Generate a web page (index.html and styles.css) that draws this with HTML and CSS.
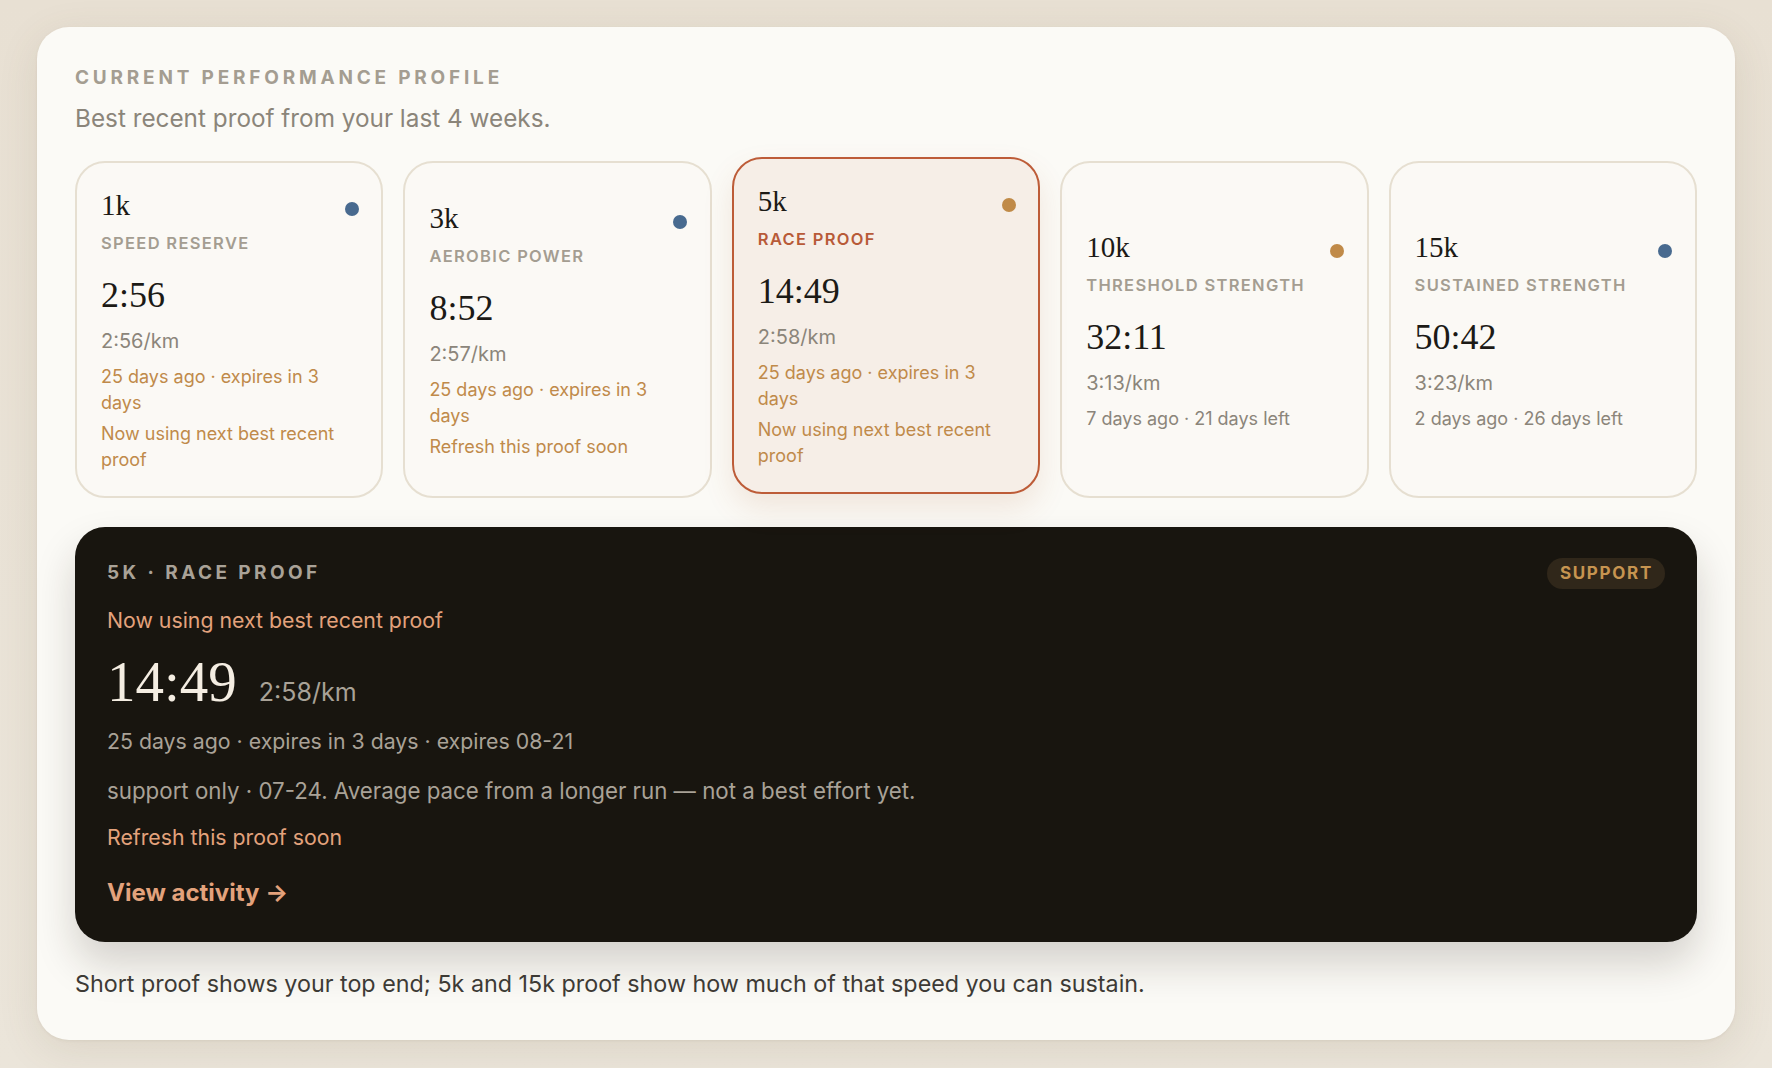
FILE: index.html
```html
<!DOCTYPE html>
<html lang="en">
<head>
<meta charset="utf-8">
<title>Current performance profile</title>
<link rel="stylesheet" href="styles.css">
</head>
<body>
<main class="profile">
  <h2 class="eyebrow">Current performance profile</h2>
  <p class="subtitle">Best recent proof from your last 4 weeks.</p>

  <div class="cards">
    <article class="card">
      <div class="card-head"><span class="dist">1k</span><span class="dot dot-blue"></span></div>
      <div class="label">Speed reserve</div>
      <div class="time">2:56</div>
      <div class="pace">2:56/km</div>
      <p class="meta warn">25 days ago · expires in 3 days</p>
      <p class="note warn">Now using next best recent proof</p>
    </article>
    <article class="card">
      <div class="card-head"><span class="dist">3k</span><span class="dot dot-blue"></span></div>
      <div class="label">Aerobic power</div>
      <div class="time">8:52</div>
      <div class="pace">2:57/km</div>
      <p class="meta warn">25 days ago · expires in 3 days</p>
      <p class="note warn">Refresh this proof soon</p>
    </article>
    <article class="card card-active">
      <div class="card-head"><span class="dist">5k</span><span class="dot dot-gold"></span></div>
      <div class="label label-active">Race proof</div>
      <div class="time">14:49</div>
      <div class="pace">2:58/km</div>
      <p class="meta warn">25 days ago · expires in 3 days</p>
      <p class="note warn">Now using next best recent proof</p>
    </article>
    <article class="card">
      <div class="card-head"><span class="dist">10k</span><span class="dot dot-gold"></span></div>
      <div class="label">Threshold strength</div>
      <div class="time">32:11</div>
      <div class="pace">3:13/km</div>
      <p class="meta">7 days ago · 21 days left</p>
    </article>
    <article class="card">
      <div class="card-head"><span class="dist">15k</span><span class="dot dot-blue"></span></div>
      <div class="label">Sustained strength</div>
      <div class="time">50:42</div>
      <div class="pace">3:23/km</div>
      <p class="meta">2 days ago · 26 days left</p>
    </article>
  </div>

  <section class="detail">
    <div class="detail-head">
      <span class="detail-label">5k · Race proof</span>
      <span class="badge">Support</span>
    </div>
    <p class="detail-alert">Now using next best recent proof</p>
    <div class="detail-time">
      <span class="big-time">14:49</span>
      <span class="big-pace">2:58/km</span>
    </div>
    <p class="detail-meta">25 days ago · expires in 3 days · expires 08-21</p>
    <p class="detail-source">support only · 07-24. Average pace from a longer run — not a best effort yet.</p>
    <p class="detail-refresh">Refresh this proof soon</p>
    <a class="detail-link" href="#">View activity →</a>
  </section>

  <p class="footnote">Short proof shows your top end; 5k and 15k proof show how much of that speed you can sustain.</p>
</main>
</body>
</html>
```

FILE: styles.css
```css
* { box-sizing: border-box; }

html, body {
  margin: 0;
  height: 100%;
}

body {
  background: linear-gradient(180deg, #e8e0d3 0%, #ebe5da 100%);
  padding: 27px 37px 0;
  font-family: Inter, "Noto Sans", "Liberation Sans", sans-serif;
  color: #1c1a16;
}

.profile {
  background: #fbfaf6;
  border-radius: 32px;
  padding: 40px 38px 41px;
  box-shadow: 0 10px 40px rgba(110, 90, 60, 0.12), 0 1px 3px rgba(110, 90, 60, 0.08);
}

.eyebrow {
  margin: 0;
  font-size: 19px;
  line-height: 22px;
  font-weight: 700;
  letter-spacing: 0.2em;
  text-transform: uppercase;
  color: #a49d91;
}

.subtitle {
  margin: 14px 0 0;
  font-size: 24.3px;
  line-height: 30px;
  color: #8b857a;
}

.cards {
  margin-top: 28px;
  display: grid;
  grid-template-columns: repeat(5, 1fr);
  gap: 20px;
}

.card {
  background: #fbf9f5;
  border: 2px solid #e6dfd1;
  border-radius: 30px;
  padding: 25px 24px 22.5px;
  display: flex;
  flex-direction: column;
  justify-content: center;
}

.card-active {
  background: #f6eee7;
  border-color: #bd5c38;
  transform: translateY(-4px);
  box-shadow: 0 14px 30px rgba(170, 90, 50, 0.13);
}

.card-head {
  display: flex;
  justify-content: space-between;
  align-items: center;
}

.dist {
  font-family: "Liberation Serif", "DejaVu Serif", serif;
  font-size: 29px;
  line-height: 34px;
  color: #1c1a16;
}

.dot {
  width: 14px;
  height: 14px;
  border-radius: 50%;
  margin-top: 8.5px;
  margin-right: -1.5px;
}

.dot-blue { background: #486a8f; }
.dot-gold { background: #c08a48; }

.label {
  margin-top: 11px;
  font-size: 16.5px;
  line-height: 20px;
  font-weight: 600;
  letter-spacing: 0.08em;
  text-transform: uppercase;
  color: #a49d91;
}

.label-active { color: #b85a38; }

.time {
  margin-top: 20px;
  font-family: "Liberation Serif", "DejaVu Serif", serif;
  font-size: 36px;
  line-height: 44px;
  color: #1c1a16;
}

.pace {
  margin-top: 10px;
  font-size: 20px;
  line-height: 28px;
  color: #8b857a;
}

.meta {
  margin: 9px 0 0;
  font-size: 18px;
  line-height: 26px;
  color: #8b857a;
}

.note {
  margin: 5px 0 0;
  font-size: 18px;
  line-height: 26px;
}

.warn { color: #c08a4a; }

.detail {
  margin-top: 29px;
  background: #18150f;
  border-radius: 30px;
  padding: 31px 32px 34px;
  color: #a9a297;
  box-shadow: 0 22px 40px rgba(40, 30, 15, 0.18);
}

.detail-head {
  display: flex;
  justify-content: space-between;
  align-items: center;
}

.detail-label {
  font-size: 19px;
  line-height: 22px;
  font-weight: 700;
  letter-spacing: 0.18em;
  text-transform: uppercase;
  color: #a9a297;
}

.badge {
  height: 31px;
  line-height: 31px;
  padding: 0 12px 0 13px;
  border-radius: 16px;
  background: #30271a;
  color: #c69450;
  font-size: 17px;
  font-weight: 700;
  letter-spacing: 0.1em;
  text-transform: uppercase;
}

.detail-alert {
  margin: 16px 0 0;
  font-size: 21.3px;
  line-height: 30px;
  color: #e3a27c;
}

.detail-time {
  margin-top: 19px;
  display: flex;
  align-items: baseline;
  gap: 22px;
}

.big-time {
  font-family: "Liberation Serif", "DejaVu Serif", serif;
  font-size: 57px;
  line-height: 56px;
  color: #f4ede2;
}

.big-pace {
  font-size: 25px;
  line-height: 30px;
  color: #a9a297;
}

.detail-meta {
  margin: 16px 0 0;
  font-size: 21.3px;
  line-height: 30px;
  color: #a9a297;
}

.detail-source {
  margin: 20px 0 0;
  font-size: 22.3px;
  line-height: 30px;
  color: #a9a297;
}

.detail-refresh {
  margin: 16px 0 0;
  font-size: 21.3px;
  line-height: 30px;
  color: #e3a27c;
}

.detail-link {
  display: inline-block;
  margin-top: 26px;
  font-size: 24px;
  line-height: 30px;
  font-weight: 700;
  color: #e3a27c;
  text-decoration: none;
}

.footnote {
  margin: 27px 0 0;
  font-size: 23.3px;
  line-height: 30px;
  color: #3d3a35;
}
```
